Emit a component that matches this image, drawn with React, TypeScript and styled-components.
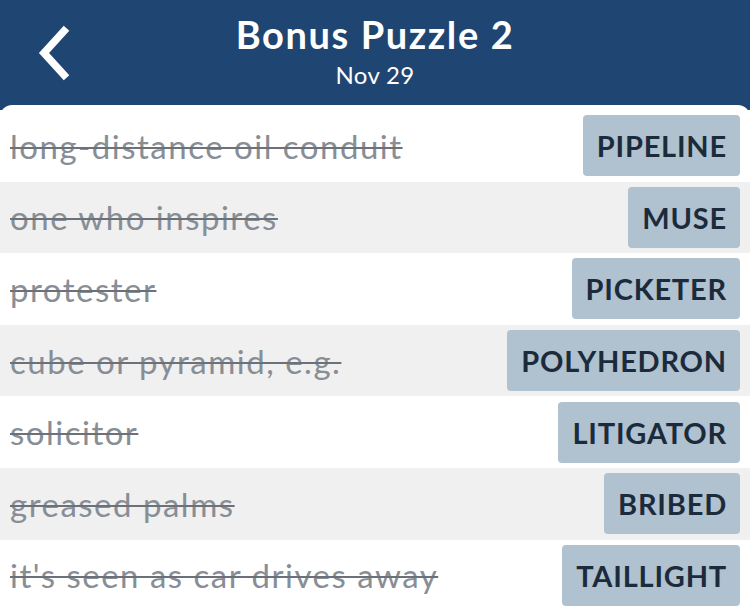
import styled, { createGlobalStyle } from 'styled-components'

const GlobalStyle = createGlobalStyle`
    body {
        margin: 0;
        background: #1f4672;
        font-family: Lato, "Open Sans", sans-serif;
    }
`

const StyledPage = styled.div`
    width: 750px;
    height: 608px;
    overflow: hidden;
    background: #1f4672;
    display: flex;
    flex-direction: column;
`

const StyledHeader = styled.header`
    height: 105px;
    flex-shrink: 0;
    display: flex;
    align-items: center;
    justify-content: center;
    position: relative;
    color: #fff;
`

const StyledBack = styled.button`
    position: absolute;
    left: 30px;
    top: 24px;
    width: 48px;
    height: 58px;
    border: 0;
    padding: 0;
    background: none;
    display: flex;
    align-items: center;
    justify-content: center;
`

const StyledTitleBlock = styled.div`
    display: flex;
    flex-direction: column;
    align-items: center;
    margin-top: -2px;
`

const StyledTitle = styled.h1`
    margin: 0;
    font-size: 38px;
    font-weight: bold;
    letter-spacing: 1.6px;
    line-height: 40px;
`

const StyledDate = styled.div`
    margin-top: 6px;
    font-size: 24px;
    line-height: 30px;
    letter-spacing: 0.3px;
`

const StyledCard = styled.div`
    flex: 1;
    background: #fff;
    border-radius: 12px 12px 0 0;
    padding-top: 5px;
    display: flex;
    flex-direction: column;
`

const StyledRow = styled.div<{ $shaded: boolean }>`
    height: 71.6px;
    flex-shrink: 0;
    box-sizing: border-box;
    display: flex;
    align-items: center;
    justify-content: space-between;
    padding: 0 10px;
    background: ${({ $shaded }) => ($shaded ? '#f0f0f0' : '#fff')};
`

const StyledClue = styled.span`
    font-size: 33px;
    letter-spacing: 1.5px;
    color: #888e96;
    text-decoration: line-through;
    text-decoration-color: #6b7079;
    text-decoration-thickness: 2px;
    white-space: nowrap;
`

const StyledAnswer = styled.div`
    height: 61px;
    box-sizing: border-box;
    padding: 0 13px 0 14px;
    display: flex;
    align-items: center;
    background: #b0c1cf;
    border-radius: 4px;
    color: #1c2b3b;
    font-size: 29px;
    font-weight: bold;
    letter-spacing: 0.8px;
`

const clues = [
    { clue: 'long-distance oil conduit', answer: 'PIPELINE' },
    { clue: 'one who inspires', answer: 'MUSE' },
    { clue: 'protester', answer: 'PICKETER' },
    { clue: 'cube or pyramid, e.g.', answer: 'POLYHEDRON' },
    { clue: 'solicitor', answer: 'LITIGATOR' },
    { clue: 'greased palms', answer: 'BRIBED' },
    { clue: "it's seen as car drives away", answer: 'TAILLIGHT' },
]

export default function App() {
    return (
        <StyledPage>
            <GlobalStyle />
            <StyledHeader>
                <StyledBack aria-label="Back">
                    <svg width="40" height="56" viewBox="0 0 40 56">
                        <path
                            d="M30 6 L10 28 L30 50"
                            fill="none"
                            stroke="#fff"
                            strokeWidth="7.5"
                            strokeLinecap="square"
                        />
                    </svg>
                </StyledBack>
                <StyledTitleBlock>
                    <StyledTitle>Bonus Puzzle 2</StyledTitle>
                    <StyledDate>Nov 29</StyledDate>
                </StyledTitleBlock>
            </StyledHeader>
            <StyledCard>
                {clues.map((item, i) => (
                    <StyledRow key={item.answer} $shaded={i % 2 === 1}>
                        <StyledClue>{item.clue}</StyledClue>
                        <StyledAnswer>{item.answer}</StyledAnswer>
                    </StyledRow>
                ))}
            </StyledCard>
        </StyledPage>
    )
}
